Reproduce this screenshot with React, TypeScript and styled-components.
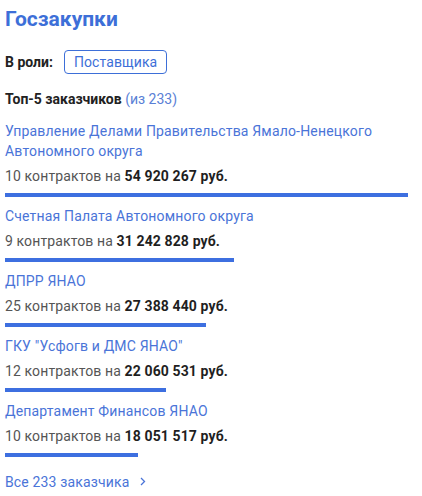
import React from "react";
import styled, { createGlobalStyle } from "styled-components";

const GlobalStyle = createGlobalStyle`
  html, body { margin: 0; padding: 0; background: #ffffff; }
  body { font-family: Roboto, "Noto Sans", Arial, sans-serif; }
`;

const Page = styled.div`
  width: 422px;
  height: 496px;
  box-sizing: border-box;
  padding: 6px 14px 0 5px;
  overflow: hidden;
`;

const Title = styled.h2`
  margin: 0;
  font-size: 21px;
  line-height: 26px;
  font-weight: 700;
  color: #3d6fd8;
`;

const RoleRow = styled.div`
  display: flex;
  align-items: center;
  gap: 11px;
  margin-top: 18px;
`;

const Label = styled.span`
  font-size: 14px;
  font-weight: 700;
  color: #222222;
`;

const RoleButton = styled.button`
  height: 24px;
  padding: 0 9px;
  border: 1px solid #3d6fd8;
  border-radius: 4px;
  background: #fff;
  color: #3d6fd8;
  font-family: inherit;
  font-size: 14px;
  line-height: 20px;
  letter-spacing: 0.1px;
  cursor: pointer;
`;

const Subtitle = styled.div`
  margin-top: 15px;
  font-size: 14px;
  line-height: 20px;
  font-weight: 700;
  color: #222222;
`;

const Muted = styled.span`
  font-weight: 400;
  color: #5a7fd6;
`;

const List = styled.ul`
  list-style: none;
  margin: 13px 0 0;
  padding: 0;
  display: flex;
  flex-direction: column;
  gap: 10px;
`;

const Item = styled.li`
  display: flex;
  flex-direction: column;
`;

const Name = styled.a`
  font-size: 14px;
  line-height: 19.5px;
  letter-spacing: 0.17px;
  color: #4a74d8;
  text-decoration: none;
`;

const Stats = styled.div`
  margin-top: 4.5px;
  font-size: 14px;
  line-height: 20px;
  letter-spacing: 0.12px;
  color: #555555;
`;

const Sum = styled.b`
  font-weight: 700;
  color: #1f1f1f;
`;

const Bar = styled.div`
  margin-top: 7px;
  height: 4px;
  background: #3d6fe0;
`;

const AllLink = styled.a`
  display: inline-flex;
  align-items: center;
  gap: 11px;
  margin-top: 15px;
  font-size: 14px;
  line-height: 20px;
  letter-spacing: 0.15px;
  color: #4a74d8;
  text-decoration: none;
`;

type Customer = { name: string; count: string; sum: string; width: number };

const customers: Customer[] = [
  { name: "Управление Делами Правительства Ямало-Ненецкого Автономного округа", count: "10 контрактов", sum: "54 920 267 руб.", width: 403 },
  { name: "Счетная Палата Автономного округа", count: "9 контрактов", sum: "31 242 828 руб.", width: 229 },
  { name: "ДПРР ЯНАО", count: "25 контрактов", sum: "27 388 440 руб.", width: 201 },
  { name: "ГКУ \"Усфогв и ДМС ЯНАО\"", count: "12 контрактов", sum: "22 060 531 руб.", width: 161 },
  { name: "Департамент Финансов ЯНАО", count: "10 контрактов", sum: "18 051 517 руб.", width: 133 },
];

const Chevron = () => (
  <svg width="6" height="9" viewBox="0 0 6 9" fill="none">
    <path d="M1 1l3.5 3.5L1 8" stroke="#4a74d8" strokeWidth="1.3" />
  </svg>
);

export default function App() {
  return (
    <Page>
      <GlobalStyle />
      <Title>Госзакупки</Title>
      <RoleRow>
        <Label>В роли:</Label>
        <RoleButton>Поставщика</RoleButton>
      </RoleRow>
      <Subtitle>
        Топ-5 заказчиков <Muted>(из 233)</Muted>
      </Subtitle>
      <List>
        {customers.map((c) => (
          <Item key={c.name}>
            <Name href="#">{c.name}</Name>
            <Stats>
              {c.count} на <Sum>{c.sum}</Sum>
            </Stats>
            <Bar style={{ width: c.width }} />
          </Item>
        ))}
      </List>
      <AllLink href="#">
        Все 233 заказчика <Chevron />
      </AllLink>
    </Page>
  );
}
